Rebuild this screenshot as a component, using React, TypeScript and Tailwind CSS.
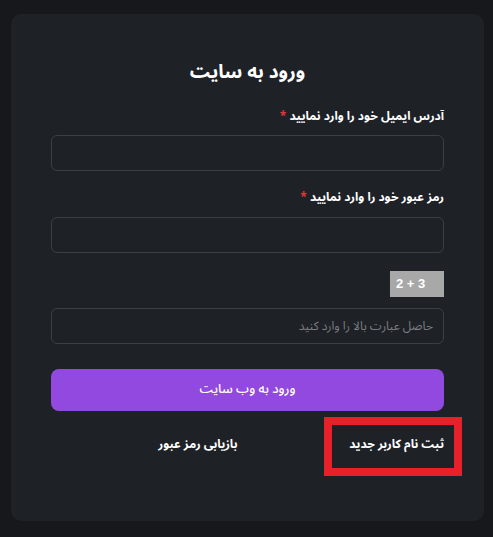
import React from "react";

const fa = { fontFamily: '"Noto Sans Arabic", "DejaVu Sans", sans-serif' };

function Label({ text }: { text: string }) {
  return (
    <label className="block text-[12px] font-bold leading-5 text-white">
      {text} <span className="text-[#e0353d]">*</span>
    </label>
  );
}

export default function App() {
  return (
    <div dir="rtl" style={fa} className="relative min-h-[537px] w-[493px] bg-[#16181b] pt-[14px]">
      <div className="ml-[11px] mr-[9px] rounded-[10px] bg-[#1e2126] px-[40px] pb-[66px] pt-[44px]">
        <h1 className="text-center text-[19px] font-bold leading-7 text-white">ورود به سایت</h1>

        <div className="mt-[21px]">
          <Label text="آدرس ایمیل خود را وارد نمایید" />
          <input className="mt-[8px] block h-[36px] w-full rounded-[6px] border border-[#3b3e44] bg-transparent px-3 text-[13px] text-white outline-none" />
        </div>

        <div className="mt-[17px]">
          <Label text="رمز عبور خود را وارد نمایید" />
          <input
            type="password"
            className="mt-[9px] block h-[36px] w-full rounded-[6px] border border-[#3b3e44] bg-transparent px-3 text-[13px] text-white outline-none"
          />
        </div>

        <div className="mt-[18px] flex">
          <div
            dir="ltr"
            className="flex h-[26px] w-[54px] items-center bg-[#a8a8a8] pl-[6px] text-[13px] font-bold text-white"
            style={{ fontFamily: '"Liberation Sans", sans-serif' }}
          >
            2 + 3
          </div>
        </div>

        <input
          placeholder="حاصل عبارت بالا را وارد کنید"
          className="mt-[11px] block h-[36px] w-full rounded-[6px] border border-[#3b3e44] bg-transparent px-[10px] text-[12px] text-white outline-none placeholder:text-[#7b7e84]"
        />

        <button className="mt-[25px] block h-[42px] w-full rounded-[8px] bg-[#9249e0] text-[13px] font-medium text-white">
          ورود به وب سایت
        </button>

        <div className="mt-[24px] grid grid-cols-2 text-[12px] font-bold leading-5 text-white">
          <a className="text-right">ثبت نام کاربر جدید</a>
          <a className="pr-[10px] text-right">بازیابی رمز عبور</a>
        </div>
      </div>

      <div className="pointer-events-none absolute left-[324px] top-[417px] h-[59px] w-[138px] border-[8px] border-[#e8202a]" />
    </div>
  );
}
